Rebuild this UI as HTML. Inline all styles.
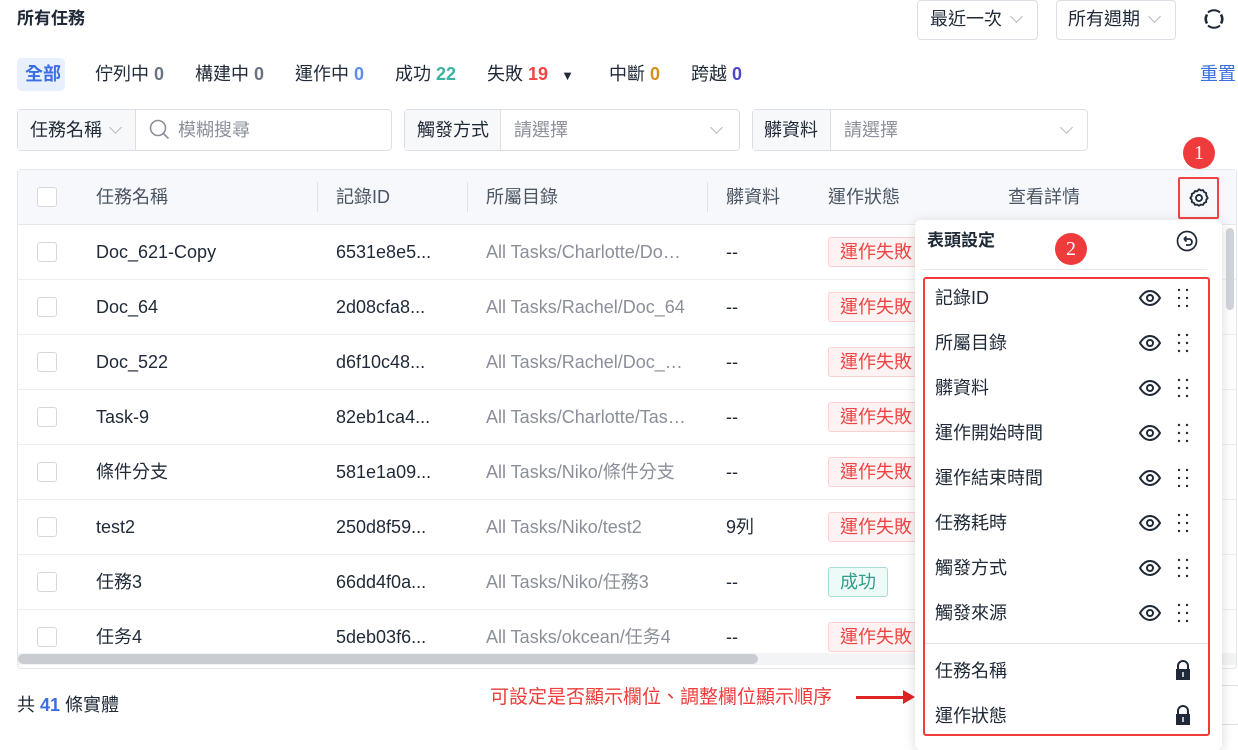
<!DOCTYPE html>
<html><head><meta charset="utf-8"><style>
*{box-sizing:border-box;margin:0;padding:0}
body{width:1238px;height:740px;overflow:hidden;background:#fff;font-family:"Liberation Sans","Noto Sans CJK TC",sans-serif;color:#1f2937;position:relative;font-size:18px}
.a{position:absolute;white-space:nowrap;line-height:20px}
.box{position:absolute;border:1px solid #dcdfe6;border-radius:4px;background:#fff}
.chev{display:inline-block;width:9px;height:9px;border-right:1.3px solid #b5b9c2;border-bottom:1.3px solid #b5b9c2;transform:rotate(45deg)}
.cb{position:absolute;left:37px;width:20px;height:20px;border:1px solid #d5d8de;border-radius:3px;background:#fff}
.row{position:absolute;left:18px;width:1218px;height:55px;border-bottom:1px solid #eceef2}
.tag{position:absolute;left:828px;border:1px solid #fbd0d0;background:#fef2f2;color:#ef4444;border-radius:3px;padding:4px 11px;font-size:18px;line-height:20px}
.gray{color:#8a8f99}
.it{position:absolute;left:935px;font-size:18px;line-height:20px;color:#1f2937}
</style></head><body>
<div class="a" style="left:17px;top:9px;font-weight:bold;font-size:17px">所有任務</div>
<div class="box" style="left:917px;top:0;width:121px;height:40px"></div>
<div class="a" style="left:930px;top:9px">最近一次</div><span class="a chev" style="left:1012px;top:12px"></span>
<div class="box" style="left:1056px;top:0;width:120px;height:40px"></div>
<div class="a" style="left:1068px;top:9px">所有週期</div><span class="a chev" style="left:1150px;top:12px"></span>
<svg class="a" style="left:1203px;top:8px" width="22" height="22" viewBox="0 0 22 22"><path d="M5 4.5A9 9 0 0 1 17 4.5M17 17.5A9 9 0 0 1 5 17.5" stroke="#1f2937" stroke-width="2" fill="none"/><path d="M4 6.5A9 9 0 0 0 4 15.5M18 6.5A9 9 0 0 1 18 15.5" stroke="#1f2937" stroke-width="2.6" fill="none"/></svg>

<div class="a" style="left:17px;top:58px;width:48px;height:33px;background:#e8effd;border-radius:5px;color:#3b6fe0;font-weight:bold;padding:6px 8px">全部</div>
<div class="a" style="left:95px;top:64px">佇列中 <b style="color:#6b7280">0</b></div>
<div class="a" style="left:195px;top:64px">構建中 <b style="color:#6b7280">0</b></div>
<div class="a" style="left:295px;top:64px">運作中 <b style="color:#5b8cf5">0</b></div>
<div class="a" style="left:395px;top:64px">成功 <b style="color:#3bb3a0">22</b></div>
<div class="a" style="left:487px;top:64px">失敗 <b style="color:#ef4444">19</b> <span style="font-size:13px;margin-left:8px">▼</span></div>
<div class="a" style="left:609px;top:64px">中斷 <b style="color:#d4901e">0</b></div>
<div class="a" style="left:691px;top:64px">跨越 <b style="color:#4f46c5">0</b></div>
<div class="a" style="left:1200px;top:64px;color:#3b6fe0">重置</div>

<div class="box" style="left:17px;top:109px;width:375px;height:42px"></div>
<div class="a" style="left:18px;top:110px;width:118px;height:40px;background:#f7f8fa;border-right:1px solid #dcdfe6"></div>
<div class="a" style="left:30px;top:120px">任務名稱</div><span class="a chev" style="left:111px;top:123px"></span>
<svg class="a" style="left:149px;top:119px" width="22" height="22"><circle cx="9" cy="9" r="7.5" stroke="#8a8f99" stroke-width="1.6" fill="none"/><path d="M14.5 14.5l5 5" stroke="#8a8f99" stroke-width="1.6"/></svg>
<div class="a gray" style="left:178px;top:120px">模糊搜尋</div>
<div class="box" style="left:404px;top:109px;width:336px;height:42px"></div>
<div class="a" style="left:405px;top:110px;width:96px;height:40px;background:#f7f8fa;border-right:1px solid #dcdfe6"></div>
<div class="a" style="left:417px;top:120px">觸發方式</div>
<div class="a gray" style="left:514px;top:120px">請選擇</div>
<span class="a chev" style="left:712px;top:123px"></span>
<div class="box" style="left:752px;top:109px;width:336px;height:42px"></div>
<div class="a" style="left:753px;top:110px;width:78px;height:40px;background:#f7f8fa;border-right:1px solid #dcdfe6"></div>
<div class="a" style="left:764px;top:120px">髒資料</div>
<div class="a gray" style="left:844px;top:120px">請選擇</div>
<span class="a chev" style="left:1062px;top:123px"></span>

<div class="a" style="left:17px;top:169px;width:1220px;height:500px;border:1px solid #e5e7eb;border-radius:4px;overflow:hidden"></div>
<div class="a" style="left:18px;top:170px;width:1218px;height:55px;background:#f7f8fb;border-bottom:1px solid #e5e7eb"></div>
<div class="cb" style="top:187px"></div>
<div class="a" style="left:96px;top:187px;color:#4b5563">任務名稱</div>
<div class="a" style="left:317px;top:182px;width:1px;height:30px;background:#dfe2e7"></div>
<div class="a" style="left:336px;top:187px;color:#4b5563">記錄ID</div>
<div class="a" style="left:467px;top:182px;width:1px;height:30px;background:#dfe2e7"></div>
<div class="a" style="left:486px;top:187px;color:#4b5563">所屬目錄</div>
<div class="a" style="left:707px;top:182px;width:1px;height:30px;background:#dfe2e7"></div>
<div class="a" style="left:726px;top:187px;color:#4b5563">髒資料</div>
<div class="a" style="left:828px;top:187px;color:#4b5563">運作狀態</div>
<div class="a" style="left:1008px;top:187px;color:#4b5563">查看詳情</div>
<div class="a" style="left:1178px;top:177px;width:41px;height:42px;border:2px solid #ef4444;border-radius:2px"></div>
<svg class="a" style="left:1188px;top:187px" width="22" height="22" viewBox="0 0 24 24"><path d="M12 2.5l2 1.2 2.4-.3 1.2 2.1 2.2 1 .1 2.4L21.5 12l-1.6 2 -.1 2.4-2.2 1-1.2 2.1-2.4-.3-2 1.3-2-1.3-2.4.3-1.2-2.1-2.2-1-.1-2.4L2.5 12l1.6-2.1.1-2.4 2.2-1 1.2-2.1 2.4.3z" fill="none" stroke="#1f2937" stroke-width="2" stroke-linejoin="round"/><circle cx="12" cy="12" r="3.3" fill="none" stroke="#1f2937" stroke-width="2"/></svg>
<div class="a" style="left:1183px;top:137px;width:32px;height:32px;border-radius:50%;background:#ef3b3b;color:#fff;font-family:'Liberation Serif',serif;font-size:20px;text-align:center;line-height:32px">1</div>

<div class="row" style="top:225px"></div><div class="cb" style="top:242px"></div><div class="a" style="left:96px;top:242px">Doc_621-Copy</div><div class="a" style="left:336px;top:242px">6531e8e5...</div><div class="a gray" style="left:486px;top:242px">All Tasks/Charlotte/Do…</div><div class="a" style="left:726px;top:242px">--</div><div class="tag" style="top:237px">運作失敗</div>
<div class="row" style="top:280px"></div><div class="cb" style="top:297px"></div><div class="a" style="left:96px;top:297px">Doc_64</div><div class="a" style="left:336px;top:297px">2d08cfa8...</div><div class="a gray" style="left:486px;top:297px">All Tasks/Rachel/Doc_64</div><div class="a" style="left:726px;top:297px">--</div><div class="tag" style="top:292px">運作失敗</div>
<div class="row" style="top:335px"></div><div class="cb" style="top:352px"></div><div class="a" style="left:96px;top:352px">Doc_522</div><div class="a" style="left:336px;top:352px">d6f10c48...</div><div class="a gray" style="left:486px;top:352px">All Tasks/Rachel/Doc_…</div><div class="a" style="left:726px;top:352px">--</div><div class="tag" style="top:347px">運作失敗</div>
<div class="row" style="top:390px"></div><div class="cb" style="top:407px"></div><div class="a" style="left:96px;top:407px">Task-9</div><div class="a" style="left:336px;top:407px">82eb1ca4...</div><div class="a gray" style="left:486px;top:407px">All Tasks/Charlotte/Tas…</div><div class="a" style="left:726px;top:407px">--</div><div class="tag" style="top:402px">運作失敗</div>
<div class="row" style="top:445px"></div><div class="cb" style="top:462px"></div><div class="a" style="left:96px;top:462px">條件分支</div><div class="a" style="left:336px;top:462px">581e1a09...</div><div class="a gray" style="left:486px;top:462px">All Tasks/Niko/條件分支</div><div class="a" style="left:726px;top:462px">--</div><div class="tag" style="top:457px">運作失敗</div>
<div class="row" style="top:500px"></div><div class="cb" style="top:517px"></div><div class="a" style="left:96px;top:517px">test2</div><div class="a" style="left:336px;top:517px">250d8f59...</div><div class="a gray" style="left:486px;top:517px">All Tasks/Niko/test2</div><div class="a" style="left:726px;top:517px">9列</div><div class="tag" style="top:512px">運作失敗</div>
<div class="row" style="top:555px"></div><div class="cb" style="top:572px"></div><div class="a" style="left:96px;top:572px">任務3</div><div class="a" style="left:336px;top:572px">66dd4f0a...</div><div class="a gray" style="left:486px;top:572px">All Tasks/Niko/任務3</div><div class="a" style="left:726px;top:572px">--</div><div class="tag" style="top:567px;color:#2f9e8c;border-color:#a8ddd3;background:#eefaf7">成功</div>
<div class="cb" style="top:627px"></div><div class="a" style="left:96px;top:627px">任务4</div><div class="a" style="left:336px;top:627px">5deb03f6...</div><div class="a gray" style="left:486px;top:627px">All Tasks/okcean/任务4</div><div class="a" style="left:726px;top:627px">--</div><div class="tag" style="top:622px">運作失敗</div>
<div class="a" style="left:18px;top:653px;width:1218px;height:12px;background:#f3f4f6"></div>
<div class="a" style="left:18px;top:654px;width:740px;height:10px;background:#c9ccd1;border-radius:5px"></div>

<div class="a" style="left:17px;top:695px">共 <b style="color:#3b6fe0">41</b> 條實體</div>
<div class="a" style="left:490px;top:688px;color:#ef3b3b;font-size:19px">可設定是否顯示欄位、調整欄位顯示順序</div>
<div class="a" style="left:856px;top:696px;width:50px;height:3px;background:#e02424"></div>
<div class="a" style="left:903px;top:690px;border-left:12px solid #e02424;border-top:7px solid transparent;border-bottom:7px solid transparent"></div>
<div class="box" style="left:1200px;top:685px;width:40px;height:40px"></div>
<div class="a" style="left:1226px;top:228px;width:8px;height:82px;background:#d1d5db;border-radius:4px"></div>

<div class="a" style="left:915px;top:220px;width:307px;height:530px;background:#fff;border-radius:6px;box-shadow:0 2px 12px rgba(0,0,0,.15)"></div>
<div class="a" style="left:927px;top:231px;font-weight:bold;font-size:17px">表頭設定</div>
<svg class="a" style="left:1176px;top:230px" width="22" height="22" viewBox="0 0 22 22"><circle cx="11" cy="11" r="9.5" fill="none" stroke="#1f2937" stroke-width="1.7"/><path d="M8 9h5a3 3 0 0 1 0 6h-3M8 9l2.5-2.5M8 9l2.5 2.5" fill="none" stroke="#1f2937" stroke-width="1.7"/></svg>
<div class="a" style="left:1055px;top:233px;width:32px;height:32px;border-radius:50%;background:#ef3b3b;color:#fff;font-family:'Liberation Serif',serif;font-size:20px;text-align:center;line-height:32px">2</div>
<div class="a" style="left:922px;top:269px;width:285px;height:1px;background:#e5e7eb"></div>
<div class="a" style="left:923px;top:277px;width:287px;height:459px;border:2px solid #ef3b3b;border-radius:3px"></div>
<div class="a" style="left:925px;top:643px;width:283px;height:1px;background:#e0e2e8"></div>
<div class="it" style="top:288px">記錄ID</div>
<div class="it" style="top:333px">所屬目錄</div>
<div class="it" style="top:378px">髒資料</div>
<div class="it" style="top:423px">運作開始時間</div>
<div class="it" style="top:468px">運作結束時間</div>
<div class="it" style="top:513px">任務耗時</div>
<div class="it" style="top:558px">觸發方式</div>
<div class="it" style="top:603px">觸發來源</div>
<div class="it" style="top:661px">任務名稱</div>
<div class="it" style="top:706px">運作狀態</div>
<svg class="a" style="left:1138px;top:287px" width="60" height="340">
<g id="e"><path d="M2 11c3-5 6-7 10-7s7 2 10 7c-3 5-6 7-10 7s-7-2-10-7z" fill="none" stroke="#1f2937" stroke-width="2"/><circle cx="12" cy="11" r="3" fill="none" stroke="#1f2937" stroke-width="2"/><g fill="#1f2937"><circle cx="41" cy="3" r="1.2"/><circle cx="49" cy="3" r="1.2"/><circle cx="41" cy="11" r="1.2"/><circle cx="49" cy="11" r="1.2"/><circle cx="41" cy="19" r="1.2"/><circle cx="49" cy="19" r="1.2"/></g></g>
<use href="#e" y="45"/><use href="#e" y="90"/><use href="#e" y="135"/><use href="#e" y="180"/><use href="#e" y="225"/><use href="#e" y="270"/><use href="#e" y="315"/>
</svg>
<svg class="a" style="left:1173px;top:660px" width="20" height="66"><g id="l"><path d="M5 9V6a5 5 0 0 1 10 0v3" fill="none" stroke="#1f2937" stroke-width="2"/><rect x="3" y="9" width="14" height="11" fill="#1f2937"/><rect x="9.3" y="12" width="1.4" height="5" fill="#fff"/></g><use href="#l" y="45"/></svg>
</body></html>
